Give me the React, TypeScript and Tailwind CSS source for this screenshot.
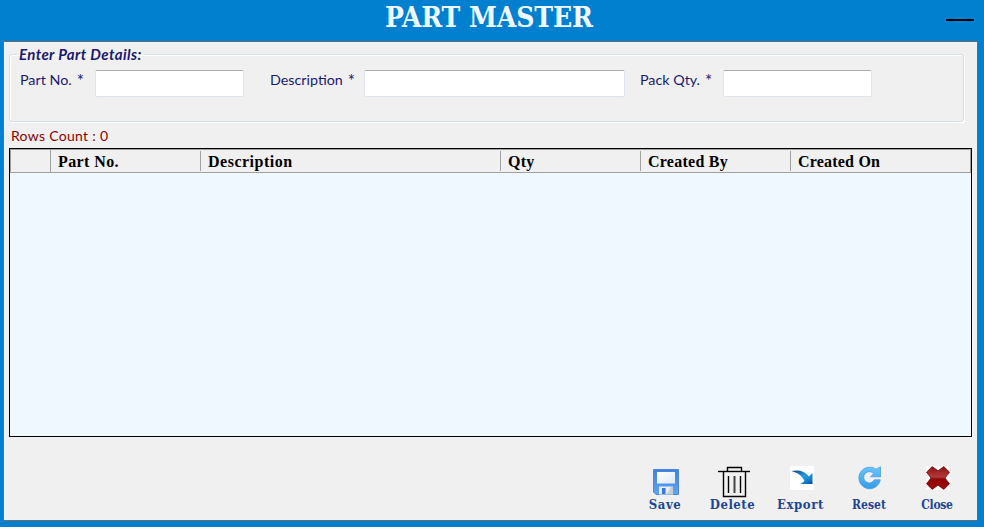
import type { ReactNode } from "react";

function Field({ label, labelClass, inputClass }: { label: string; labelClass: string; inputClass: string }) {
  return (
    <label className="flex items-start">
      <span className={`flex whitespace-nowrap text-[14.3px] leading-5 ${labelClass}`}>
        {label}
        <span className="ml-[5px] mt-px text-[17px]">*</span>
      </span>
      <input
        className={`h-[27px] rounded-[2px] border border-[#e0e4ec] border-t-[#abadb3] bg-white px-1 outline-none ${inputClass}`}
      />
    </label>
  );
}

function SaveIcon() {
  return (
    <svg width="26" height="26" viewBox="0 0 26 26">
      <defs>
        <linearGradient id="disk" x1="0" y1="0" x2="0" y2="1">
          <stop offset="0" stopColor="#3f83dd" />
          <stop offset="1" stopColor="#5ea4f8" />
        </linearGradient>
        <linearGradient id="paper" x1="0" y1="0" x2="1" y2="1">
          <stop offset="0" stopColor="#ffffff" />
          <stop offset="1" stopColor="#dfe9f5" />
        </linearGradient>
      </defs>
      <path d="M0.5 0.5h25v25H3l-2.5-2.5z" fill="url(#disk)" stroke="#4a88dc" />
      <rect x="4" y="3" width="18" height="11.5" fill="url(#paper)" />
      <rect x="6" y="17.5" width="14" height="8" fill="#e9edf3" />
      <rect x="9" y="19" width="3.500" height="6" fill="#3478d8" />
      <path d="M14 25l4-7h2v7z" fill="#c8ccd4" />
    </svg>
  );
}

function TrashIcon() {
  return (
    <svg width="32" height="32" viewBox="0 0 32 32" fill="none" stroke="#000">
      <path d="M0 5.5h32" strokeWidth="1.400" />
      <path d="M9.5 5V1.5h14V5" strokeWidth="1.400" />
      <path d="M5.5 5.5v25h22v-25" strokeWidth="1.400" />
      <path d="M10.500 10v17M22.500 10v17" strokeWidth="1.400" />
      <path d="M16.500 10v17" stroke="#444" strokeWidth="2" />
    </svg>
  );
}

function ExportIcon() {
  return (
    <svg width="24" height="24" viewBox="0 0 24 24">
      <defs>
        <linearGradient id="arrow" x1="0" y1="0" x2="1" y2="1">
          <stop offset="0" stopColor="#0d3f70" />
          <stop offset=".5" stopColor="#259be0" />
          <stop offset=".8" stopColor="#1479c8" />
          <stop offset="1" stopColor="#0a3f86" />
        </linearGradient>
      </defs>
      <rect width="24" height="24" fill="#fff" />
      <path d="M1.500 5C8 3.500 15 5 18.800 10.500L22.500 7v11H10.500l4-3C12 9.500 7 6.500 1.500 5z" fill="url(#arrow)" />
    </svg>
  );
}

function ResetIcon() {
  return (
    <svg width="24" height="24" viewBox="0 0 24 24">
      <defs>
        <linearGradient id="reset" x1="0" y1="0" x2="0" y2="1">
          <stop offset="0" stopColor="#6cc5fa" />
          <stop offset="1" stopColor="#359be8" />
        </linearGradient>
      </defs>
      <path
        d="M18 3.200L22.500.8v10H12.500l3.200-3a5.600 5.600 0 1 0 .6 6h6A10.800 10.800 0 1 1 18 3.200z"
        fill="url(#reset)"
        stroke="#3a9be3"
        strokeWidth=".7"
      />
    </svg>
  );
}

function CloseIcon() {
  return (
    <svg width="24" height="24" viewBox="0 0 24 24">
      <defs>
        <linearGradient id="cross" x1="0" y1="0" x2="0" y2="1">
          <stop offset="0" stopColor="#8f1010" />
          <stop offset=".3" stopColor="#a82c2c" />
          <stop offset=".45" stopColor="#b13a3a" />
          <stop offset=".55" stopColor="#8c0505" />
          <stop offset="1" stopColor="#a30c0c" />
        </linearGradient>
      </defs>
      <rect width="24" height="24" fill="#fff" />
      <path
        d="M6.200.6L12 4.800 17.800.6 23.500 6.200 19 12l4.500 5.800-5.700 5.600L12 19.200l-5.800 4.200L.5 17.800 5 12 .5 6.200z"
        fill="url(#cross)"
        stroke="#701010"
        strokeWidth=".8"
        strokeLinejoin="round"
      />
    </svg>
  );
}

function Action({ icon, label, className, textClass }: { icon: ReactNode; label: string; className: string; textClass: string }) {
  return (
    <button className={`flex h-[50px] flex-col items-center justify-between ${className}`}>
      {icon}
      <span className={`h-[16px] whitespace-nowrap font-bold leading-[16px] text-[#1c4596] ${textClass}`}>{label}</span>
    </button>
  );
}

const columns = [
  { name: "Part No.", width: "w-[150px]", spacing: "tracking-[0.4px]" },
  { name: "Description", width: "w-[300px]", spacing: "tracking-[0.5px]" },
  { name: "Qty", width: "w-[140px]", spacing: "tracking-[0.3px]" },
  { name: "Created By", width: "w-[150px]", spacing: "tracking-[0.25px]" },
  { name: "Created On", width: "w-[179px]", spacing: "tracking-[0.2px]" },
];

export default function App() {
  return (
    <div className="flex h-[527px] w-[984px] flex-col overflow-hidden bg-[#0080cf] pl-[3px] pr-[6px] font-['Lato','Open_Sans',sans-serif]">
      <header className="flex h-[41px] shrink-0 items-start pl-[382px] pr-1">
        <h1 className="whitespace-nowrap font-['DejaVu_Serif_Condensed','DejaVu_Serif',serif] text-[28px] font-bold leading-[36px] tracking-[-0.1px] text-[#f0f8ff]">PART MASTER</h1>
        <button aria-label="Minimize" className="-mr-[3px] ml-auto mt-[19px] h-0.5 w-7 -translate-x-[3px] bg-black" />
      </header>
      <main className="flex h-[480px] shrink-0 flex-col border border-[#6b6b6b] bg-[#f0f0f0] pl-[5px] pr-[4px]">
        <fieldset className="mr-[9px] mt-[3px] h-[77px] min-w-0 rounded-[3px] border border-[#d5dfe5] pl-[10px] shadow-[1px_1px_0_#fff,inset_1px_1px_0_#fff]">
          <legend className="-ml-[3px] px-[2px] text-[15px] font-bold italic leading-[18px] tracking-[0.4px] text-[#191970]">Enter Part Details:</legend>
          <div className="mt-[7px] flex items-start text-[#191970]">
            <Field label="Part No." labelClass="w-[75px]" inputClass="w-[149px]" />
            <div className="w-[26px]" />
            <Field label="Description" labelClass="w-[94px]" inputClass="w-[261px]" />
            <div className="w-[15px]" />
            <Field label="Pack Qty." labelClass="w-[83px]" inputClass="w-[149px]" />
          </div>
        </fieldset>
        <p className="ml-[2px] mt-[3px] h-[23px] text-[14px] leading-[22px] tracking-[0.3px] text-[#8b0000]">Rows Count : 0</p>
        <section className="h-[289px] w-[963px] shrink-0 border border-black bg-[#f0f8ff]">
          <div className="flex h-[24px] items-center border border-[#a0a0a0] bg-[#f0f0f0] font-['Liberation_Serif',serif] text-[16px] font-bold">
            <div className="h-full w-[39px] shrink-0" />
            {columns.map((c, i) => (
              <div
                key={c.name}
                className={`whitespace-nowrap border-l border-[#a0a0a0] pl-[7px] ${i === 0 ? "h-[22px] leading-[24px]" : "h-[20px] leading-[22px]"} ${c.width} ${c.spacing}`}
              >
                {c.name}
              </div>
            ))}
          </div>
        </section>
        <footer className="mt-[26px] flex pl-[636px] font-['DejaVu_Serif_Condensed','DejaVu_Serif',serif]">
          <Action icon={<div className="ml-[2px] mt-[6px]"><SaveIcon /></div>} label="Save" className="w-[40px]" textClass="text-[13px] tracking-[0.6px]" />
          <Action icon={<div className="-mb-1 ml-[3px] mt-[3px]"><TrashIcon /></div>} label="Delete" className="ml-[20px] w-[55px]" textClass="text-[13px] tracking-[0.5px]" />
          <Action icon={<div className="ml-[3px] mt-[3px]"><ExportIcon /></div>} label="Export" className="ml-[13px] w-[55px]" textClass="text-[13px] tracking-[0.6px]" />
          <Action icon={<div className="ml-[2px] mt-[3px]"><ResetIcon /></div>} label="Reset" className="ml-[17px] w-[48px]" textClass="text-[12px]" />
          <Action icon={<div className="ml-[1px] mt-[3px]"><CloseIcon /></div>} label="Close" className="ml-[20px] w-[48px]" textClass="text-[12px] tracking-[-0.3px]" />
        </footer>
      </main>
    </div>
  );
}
